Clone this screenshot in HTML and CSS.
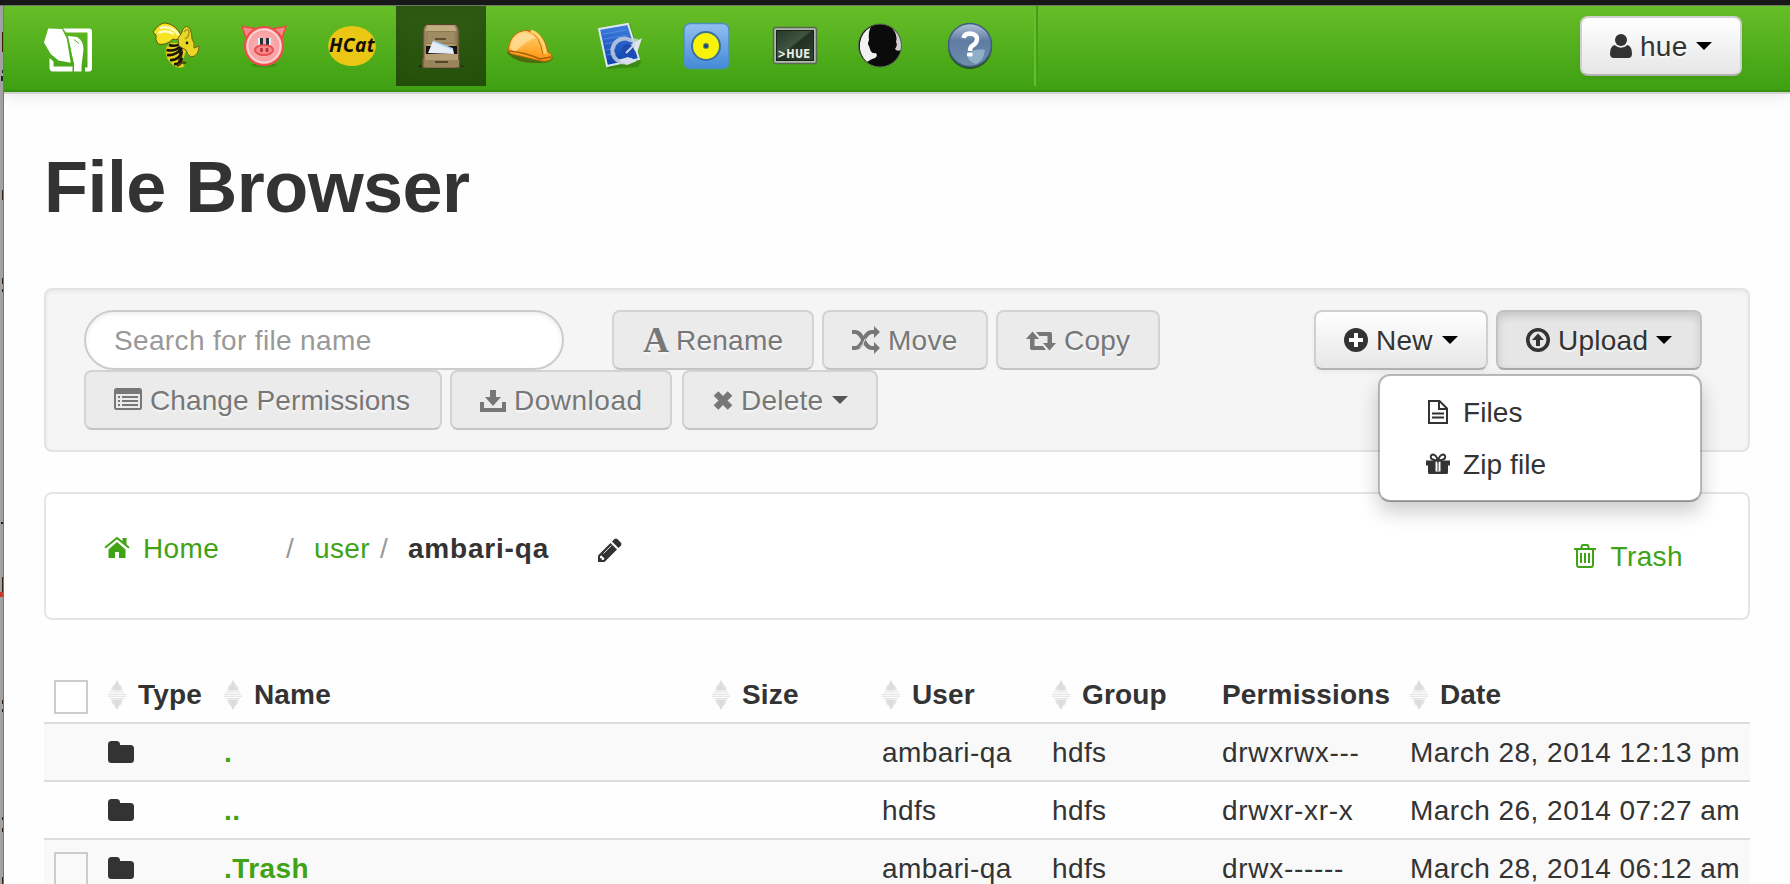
FILE: index.html
```html
<!DOCTYPE html>
<html lang="en">
<head>
<meta charset="utf-8">
<title>File Browser</title>
<link rel="stylesheet" href="styles.css">
</head>
<body>
<svg width="0" height="0" class="defs" aria-hidden="true">
  <defs>
    <linearGradient id="cab" x1="0" x2="1"><stop offset="0" stop-color="#6b5a38"/><stop offset=".15" stop-color="#b9a377"/><stop offset=".85" stop-color="#ad976b"/><stop offset="1" stop-color="#5f4f30"/></linearGradient>
    <linearGradient id="hat" x1="0" y1="0" x2="0" y2="1"><stop offset="0" stop-color="#ffd27a"/><stop offset="1" stop-color="#ff9408"/></linearGradient>
    <linearGradient id="blue" x1="0" y1="0" x2="0" y2="1"><stop offset="0" stop-color="#94bff0"/><stop offset="1" stop-color="#4389d8"/></linearGradient>
    <linearGradient id="plan" x1="0" y1="0" x2="0" y2="1"><stop offset="0" stop-color="#3f7fe0"/><stop offset="1" stop-color="#0b3fa8"/></linearGradient>
    <linearGradient id="scr" x1="0" y1="0" x2="1" y2="1"><stop offset="0" stop-color="#26382a"/><stop offset=".45" stop-color="#40543f"/><stop offset=".5" stop-color="#223022"/><stop offset="1" stop-color="#334434"/></linearGradient>
    <linearGradient id="help" x1="0" y1="0" x2="0" y2="1"><stop offset="0" stop-color="#b3c3d8"/><stop offset=".4" stop-color="#5f7ba3"/><stop offset="1" stop-color="#6d8fac"/></linearGradient>
    <radialGradient id="pigf"><stop offset="0" stop-color="#fbb9bb"/><stop offset="1" stop-color="#f79a9e"/></radialGradient>
    <symbol id="sort" viewBox="0 0 18 32"><path d="M9 1L14.500 11.500H3.500zM9 31L14.500 20.500H3.500z" fill="#dcdcdc"/><path d="M6 6l-2 5M12 6l2 5M6 26l-2-5M12 26l2-5" stroke="#e6e6e6" stroke-width="2"/><path d="M2 13h14M0 15.300h18M0 17.300h18M2 19.500h14" stroke="#e0e0e0" stroke-width="1"/></symbol>
    <symbol id="folder" viewBox="0 0 26 22"><path d="M3.500 0h5A3.500 3.500 0 0 1 12 3.500V4h10.500A3.500 3.500 0 0 1 26 7.500v11a3.500 3.500 0 0 1-3.500 3.500h-19A3.500 3.500 0 0 1 0 18.500v-15A3.500 3.500 0 0 1 3.500 0z" fill="#333"/></symbol>
  </defs>
</svg>

<svg class="edge" width="4" height="884" aria-hidden="true">
  <rect width="4" height="884" fill="#a2a2a2"/>
  <path d="M2 32h2v20h-2z" fill="#3b1d08"/><path d="M2 70h2v3h-2zM1 76h3v5h-3z" fill="#222"/>
  <path d="M2 190h2v10h-2zM2 278h2v6h-2zM2 289h2v3h-2zM1 522h3v2h-3zM2 577h2v19h-2zM2 700h2v4h-2zM2 709h2v3h-2zM2 817h2v3h-2zM2 828h2v4h-2zM2 877h2v7h-2z" fill="#33200f"/>
  <path d="M0 592h3v5H0z" fill="#c23a2c"/>
  <path d="M3 5h1v879H3z" fill="#777"/>
</svg>

<div class="topline"></div>
<nav class="navbar">
  <svg class="logo" viewBox="0 0 48 48"><g fill="#fff"><path d="M4.300 6L18 6.500 22.700 16 26.700 40.300 14.500 38 6.700 31.500 0 20z"/><path d="M19 6H45Q48 6 48 9V46Q48 49 45 49H41V45H43.500V10H22z"/><path d="M24 13.500L33 14.500Q39.500 18 39.500 27L37.500 43V49H30V41L28 32.500z"/><path d="M5.500 35.500L9.500 39V44H28.500V49H9Q5.500 49 5.500 45z"/></g><path d="M30 17l5 4M25 24l2 2" stroke="#58b120" stroke-width="1"/></svg>
  <div class="apps">
    <a class="app"><svg viewBox="0 0 48 48"><path d="M17 22C24 19 31 22 34 29L31 38Q30 43 33 44Q29 47 24 45Q12 38 14 26z" fill="#e6cb20"/><path d="M17 23q6 2 11-1M14.500 28q8 2 15-4M15 33q9 1 15-7M18 38q8 1 12-8M22 42q7 1 8-6" stroke="#17140a" stroke-width="2.600" fill="none"/><path d="M26 21l5 8-2 14-4 2 2-12z" fill="#17140a" opacity=".8"/><path d="M1 10Q8 0 14 1Q25 3 29 14Q27 19 21 17Q14 24 6 22Q3 18 4 13z" fill="#f6e324" stroke="#5d560e" stroke-width="1"/><path d="M8 6Q19 3 27 13M6 11Q14 7 22 12" stroke="#fffac0" stroke-width="2.500" fill="none"/><path d="M26 16Q30 12 31 7Q35 2 38 7Q40 11 40 17Q43 21 42 26L47 24Q47 34 39 35Q35 33 34 28L27 24z" fill="#ead626" stroke="#6e6610" stroke-width="1"/><path d="M32 10q4-5 5 0q0 5-4 7" stroke="#a29a1d" stroke-width="1.500" fill="none"/><circle cx="35" cy="21" r="1.400" fill="#221c08"/><path d="M25 44q5-5 9-3" stroke="#4b4109" stroke-width="2" fill="none"/></svg></a>
    <a class="app"><svg viewBox="0 0 48 48"><ellipse cx="24" cy="43" rx="13" ry="2.500" fill="#2a8010" opacity=".5"/><path d="M2 4.500L17 7 7 19zM46 4.500L31 7 41 19z" fill="#f5898b" stroke="#e94b3f" stroke-width="1.500"/><circle cx="24" cy="24" r="19" fill="url(#pigf)" stroke="#ee4c49" stroke-width="2"/><circle cx="24" cy="24" r="16.500" fill="none" stroke="#fbd3d3" stroke-width="2"/><path d="M18 16h5v7h-5zM26 16h5v7h-5z" fill="#e6eef0"/><path d="M20 16h3v7h-3zM26 16h3v7h-3z" fill="#213238"/><ellipse cx="24" cy="28" rx="9" ry="5" fill="#f58a8d" stroke="#e84f50" stroke-width="2"/><ellipse cx="21.500" cy="28" rx="1.500" ry="2.300" fill="#b93336"/><ellipse cx="27" cy="28" rx="1.500" ry="2.300" fill="#b93336"/></svg></a>
    <a class="app"><svg viewBox="0 0 48 48"><ellipse cx="24" cy="24" rx="23.800" ry="20" fill="#e9c714"/><text x="1" y="30" textLength="46" lengthAdjust="spacingAndGlyphs" font-family="Open Sans, sans-serif" font-size="19" font-weight="700" font-style="italic" fill="#120f02">HCat</text></svg></a>
    <a class="app active"><svg viewBox="0 0 48 48"><ellipse cx="24" cy="44" rx="23" ry="3" fill="#132f04" opacity=".7"/><path d="M10 2.500H38Q42 4 42.500 10V36L43 38V46H5V38L6 36V10Q6 4 10 2.500z" fill="url(#cab)" stroke="#51452b" stroke-width="1"/><path d="M11 4h26l3 5H8z" fill="#c0ad82"/><path d="M10 9.500h28v12H10z" fill="#a08c63" stroke="#8d7a52"/><path d="M18 17h11" stroke="#5d4e2e" stroke-width="2"/><path d="M9 24h31v8H9z" fill="#17120a"/><path d="M11 31L16 19 36 27 37 32z" fill="#e6edf7"/><path d="M16 19l20 8" stroke="#9fd0ee" stroke-width="1.500"/><path d="M8 32h33v6H8z" fill="#b5a076"/><path d="M7 38h35v7H7z" fill="#9a855b"/><path d="M18 40h13" stroke="#54462a" stroke-width="2"/></svg></a>
    <a class="app"><svg viewBox="0 0 48 48"><path d="M1 31Q10 42 34 41Q45 41 47 36L44 33 2 29z" fill="#4e4a08" opacity=".65"/><path d="M2 29C3 16 10 8 22 8.500C34 9 39 18 42 30Q47 32 46 36Q43 40 35 39L10 33Q3 32 2 29z" fill="url(#hat)" stroke="#b86a08" stroke-width="1"/><path d="M4 26Q6 13 18 10.500L31 15Q21 18 9 30z" fill="#ffe1a0" opacity=".75"/><path d="M2 29Q18 30 34 37L45 35" stroke="#a35c08" stroke-width="1.500" fill="none"/><path d="M22 9Q34 12 37 33" stroke="#bf7508" stroke-width="1" fill="none"/><path d="M25 9Q38 14 39 32" stroke="#ffd36d" stroke-width="3" fill="none"/></svg></a>
    <a class="app"><svg viewBox="0 0 48 48"><path d="M7 7L36 2 47 40 44 45 14 47z" fill="#2d6b10" opacity=".5"/><path d="M5 7L34 2 45 37 13 44z" fill="url(#plan)" stroke="#dde5ef" stroke-width="2"/><path d="M9 12l24-4M10 17l24-4M11 22l20-4M12 28l10-2M13 33l9-2" stroke="#5f94e8" stroke-width=".7"/><path d="M44 19L36 18A12 12 0 1 0 39 37" fill="none" stroke="#c4cede" stroke-width="4" opacity=".85"/><path d="M48 16L43 31 36 23z" fill="#dfe4ed"/><path d="M24 38l9 5 10-4-9-4z" fill="#d8dfeb"/><circle cx="34" cy="28" r="6" fill="#1c4bb1"/><path d="M32 31l9-9" stroke="#c8d4ea" stroke-width="2"/></svg></a>
    <a class="app"><svg viewBox="0 0 48 48"><rect x="2" y="1.500" width="45" height="45" rx="6" fill="url(#blue)" stroke="#4a91bd" stroke-width="1.500"/><circle cx="24" cy="24" r="14" fill="#f8f409" stroke="#3b719b" stroke-width="2"/><circle cx="24" cy="24" r="2.700" fill="#1a4b85" stroke="#8a9b36" stroke-width="1"/></svg></a>
    <a class="app"><svg viewBox="0 0 48 48"><rect x="3.500" y="5.500" width="43" height="36" rx="2" fill="#b2b9b0" stroke="#59694f" stroke-width="1.500"/><rect x="6.500" y="8.500" width="37" height="30" fill="url(#scr)" stroke="#172114"/><text x="7.500" y="36" textLength="33" lengthAdjust="spacingAndGlyphs" font-family="DejaVu Sans, sans-serif" font-size="12" font-weight="700" fill="#e6ece4">&gt;HUE</text></svg></a>
    <a class="app"><svg viewBox="0 0 48 48"><circle cx="22" cy="23.500" r="21.500" fill="#0b0b0b"/><path d="M13 5A21.500 21.500 0 0 0 9 40Q13 37 17 36Q20 34 18 31Q13 32 12 27L11 24Q9 22 11 18Q10 9 13 5z" fill="#f2f2f2"/><path d="M34 6Q40 13 38 20Q40 23 37 27Q39 30 43 28A22 22 0 0 0 34 6z" fill="#cfcfcf"/><circle cx="22" cy="23.500" r="21.500" fill="none" stroke="#596750" stroke-width="1"/></svg></a>
    <a class="app"><svg viewBox="0 0 48 48"><circle cx="24" cy="25" r="22" fill="#1b3b26" opacity=".8"/><circle cx="24" cy="23" r="21.500" fill="url(#help)" stroke="#3f5c84" stroke-width="1.500"/><path d="M26 29Q34 26 39 28Q38 38 30 42Q24 40 22 36z" fill="#a8cbdc" opacity=".6"/><path d="M17.500 16Q18.500 11.500 24 11.500Q31.500 12 31 18Q30 22 26 24Q24 25.500 24 29" fill="none" stroke="#fff" stroke-width="4.500"/><rect x="21" y="30.500" width="5.500" height="4" rx="1" fill="#fff"/></svg></a>
  </div>
  <button class="btn user"><svg class="ic w22" viewBox="0 0 22 28"><circle cx="11" cy="8" r="6" fill="#333"/><path d="M4.500 13Q11 18.500 17.500 13Q22 14.500 22 21.500Q22 26 18 26H4Q0 26 0 21.500Q0 14.500 4.500 13z" fill="#333"/></svg><span>hue</span><i class="caret"></i></button>
</nav>

<main class="page">
  <h1>File Browser</h1>

  <section class="well">
    <div class="tools">
      <div class="line">
        <input class="search" type="text" placeholder="Search for file name">
        <button class="btn off rename"><b class="font-a">A</b><span>Rename</span></button>
        <button class="btn off move"><svg class="ic w28" viewBox="0 0 28 28"><g fill="none" stroke="#777" stroke-width="4"><path d="M0 6H3.500C11 6 11.500 22 20 22H23"/><path d="M0 22H3.500C11 22 11.500 6 20 6H23"/></g><path d="M13.500 12.500q-3 7-5.500 9" stroke="#ebebeb" stroke-width="1" fill="none"/><path d="M22 0l6 6-6 6zM22 16l6 6-6 6z" fill="#777"/></svg><span>Move</span></button>
        <button class="btn off copy"><svg class="ic w30" viewBox="0 0 30 28"><path d="M6.500 5.500L13 13H8.500V20H17L20 24H5.500Q4 24 4 22V13H0zM10 6H24.500Q26 6 26 8V17H30L23.500 24.500 17 17H21.500V10H13.500z" fill="#777"/></svg><span>Copy</span></button>
      </div>
      <div class="line">
        <button class="btn off perms"><svg class="ic w28" viewBox="0 0 28 28"><path fill-rule="evenodd" d="M2.500 2H25.500Q28 2 28 4.500V21.500Q28 24 25.500 24H2.500Q0 24 0 21.500V4.500Q0 2 2.500 2zM2 8V21.500Q2 22 2.500 22H25.500Q26 22 26 21.500V8z" fill="#777"/><path d="M4 11h2M4 15h2M4 19h2M8 11h16M8 15h16M8 19h16" stroke="#777" stroke-width="2"/></svg><span>Change Permissions</span></button>
        <button class="btn off download"><svg class="ic w26" viewBox="0 0 26 28"><path d="M10 4h6v7h5l-8 9-8-9h5zM0 16h4v6h18v-6h4v10H0z" fill="#777"/></svg><span>Download</span></button>
        <button class="btn off delete"><svg class="ic w20" viewBox="0 0 20 28"><path d="M3 7.500L17 21.500M17 7.500L3 21.500" stroke="#777" stroke-width="6.500"/></svg><span>Delete</span><i class="caret"></i></button>
      </div>
    </div>
    <div class="actions">
      <button class="btn new"><svg class="ic w24" viewBox="0 0 24 28"><circle cx="12" cy="14" r="12" fill="#333"/><path d="M12 7v14M5 14h14" stroke="#fafafa" stroke-width="4"/></svg><span>New</span><i class="caret"></i></button>
      <div class="drop">
        <button class="btn upload"><svg class="ic w24" viewBox="0 0 24 28"><circle cx="12" cy="14" r="10.200" fill="none" stroke="#333" stroke-width="3.600"/><path d="M12 7.500l6 6.500h-4v6h-4v-6H6z" fill="#333"/></svg><span>Upload</span><i class="caret"></i></button>
        <ul class="menu">
          <li><svg viewBox="0 0 24 28"><path d="M3 3h10.500L21 10.500V25H3z M13 3.500V11h8" fill="none" stroke="#333" stroke-width="2"/><path d="M6 15.500h12M6 19.500h12" stroke="#333" stroke-width="2"/></svg><span>Files</span></li>
          <li><svg viewBox="0 0 24 28"><path d="M0 10.500h24v5h-2V22.500q0 1.500-1.500 1.500h-17Q2 24 2 22.500V15.500H0z" fill="#333"/><path d="M9.500 11.500h5v10h-5z" fill="#fff"/><path d="M11 10.500h2v11h-2z" fill="#999"/><path d="M12 10.500Q10 4.500 7 4.500Q4 5 5 8Q6 10 12 10.500Q18 10 19 8Q20 5 17 4.500Q14 4.500 12 10.500z" fill="none" stroke="#333" stroke-width="2"/></svg><span>Zip file</span></li>
        </ul>
      </div>
    </div>
  </section>

  <section class="crumbs">
    <div class="trail">
      <a class="home"><svg viewBox="0 0 26 28"><path d="M4.500 15.500L13 8l8.500 7.500V24H15v-6h-4v6H4.500z" fill="#40a316"/><path d="M1 13.800L13 4l12 9.800" fill="none" stroke="#40a316" stroke-width="2"/><path d="M18.500 4h4v7l-4-3.500z" fill="#40a316"/></svg><span>Home</span></a>
      <span class="slash first">/</span><a class="u">user</a><span class="slash">/</span>
      <b>ambari-qa</b>
      <svg class="pencil" viewBox="0 0 24 24"><path d="M0 24V17.500L12.500 5 19 11.500 6.500 24z" fill="#333"/><path d="M14 3.500l2.500-2.500Q18 0 19.300 1l3.700 3.700Q24 6 23 7.500L20.500 10z" fill="#333"/><path d="M2 18.500v1.800h1.800V22h1.500l1.300-1.300-3.300-3.500z" fill="#fff"/><path d="M5.500 15.500l8-8" stroke="#ddd" stroke-width="1"/></svg>
    </div>
    <a class="trash"><svg viewBox="0 0 22 24"><g fill="none" stroke="#40a316" stroke-width="2"><path d="M0 5h22M7 5L8 1.500Q8.200 1 9 1h4q.800 0 1 .5L15 5M3 5V20.500Q3 23 5 23H17Q19 23 19 20.500V5M7 9v10M11 9v10M15 9v10"/></g></svg><span>Trash</span></a>
  </section>

  <table class="files">
    <colgroup><col class="c1"><col class="c2"><col class="c3"><col class="c4"><col class="c4"><col class="c4"><col class="c5"><col class="c6"></colgroup>
    <thead>
      <tr>
        <th><i class="box"></i></th>
        <th><div><svg><use href="#sort"/></svg>Type</div></th>
        <th><div><svg><use href="#sort"/></svg>Name</div></th>
        <th><div><svg><use href="#sort"/></svg>Size</div></th>
        <th><div><svg><use href="#sort"/></svg>User</div></th>
        <th><div><svg><use href="#sort"/></svg>Group</div></th>
        <th><div>Permissions</div></th>
        <th><div><svg><use href="#sort"/></svg>Date</div></th>
      </tr>
    </thead>
    <tbody>
      <tr><td></td><td><svg class="fold"><use href="#folder"/></svg></td><td><b>.</b></td><td></td><td>ambari-qa</td><td>hdfs</td><td class="mode">drwxrwx---</td><td class="date">March 28, 2014 12:13 pm</td></tr>
      <tr><td></td><td><svg class="fold"><use href="#folder"/></svg></td><td><b>..</b></td><td></td><td>hdfs</td><td>hdfs</td><td class="mode">drwxr-xr-x</td><td class="date">March 26, 2014 07:27 am</td></tr>
      <tr><td><i class="box"></i></td><td><svg class="fold"><use href="#folder"/></svg></td><td><b>.Trash</b></td><td></td><td>ambari-qa</td><td>hdfs</td><td class="mode">drwx------</td><td class="date">March 28, 2014 06:12 am</td></tr>
    </tbody>
  </table>
</main>
</body>
</html>
```
FILE: styles.css
```css
* { box-sizing: border-box; }
html { height: 884px; overflow: hidden; }
body {
  margin: 0;
  height: 884px;
  overflow: hidden;
  background: #fefefe;
  color: #333;
  font: 28px/40px "Liberation Sans", Arial, sans-serif;
  letter-spacing: .4px;
  position: relative;
}
svg { display: block; flex: none; }
.defs { position: absolute; }
.edge { position: absolute; left: 0; top: 0; }
.topline { height: 6px; background: #181818; border-bottom: 1px solid #6d7868; position: relative; }

.navbar {
  margin-left: 4px;
  height: 86px;
  padding: 0 48px 0 40px;
  display: flex;
  align-items: flex-start;
  background: linear-gradient(#67be28, #3ea012);
  border-bottom: 2px solid #389010;
  box-shadow: 0 2px 0 #d2d2d2, 0 2px 16px rgba(0, 0, 0, .12);
}
.logo { width: 48px; height: 49px; margin-top: 16px; overflow: visible; }
.apps {
  display: flex;
  height: 80px;
  margin-left: 40px;
  padding-right: 20px;
  border-right: 2px solid #68bd2c;
  box-shadow: 2px 0 0 #42a016;
}
.app { width: 88px; height: 80px; display: flex; align-items: center; justify-content: center; }
.app svg { width: 48px; height: 48px; overflow: visible; }
.app.active { width: 90px; background: linear-gradient(#305c14, #23510a); box-shadow: inset 0 6px 16px rgba(0, 0, 0, .08); }

.btn {
  height: 60px;
  padding: 0 28px;
  display: flex;
  align-items: center;
  flex: none;
  border: 2px solid #cfcfcf;
  border-bottom-color: #b3b3b3;
  border-radius: 8px;
  background: linear-gradient(#fff, #e6e6e6);
  box-shadow: inset 0 2px 0 rgba(255, 255, 255, .2), 0 2px 4px rgba(0, 0, 0, .05);
  color: #333;
  font: inherit;
  letter-spacing: .25px;
  text-shadow: 0 2px 2px rgba(255, 255, 255, .75);
  white-space: nowrap;
}
.btn span, .menu span, .home span, .trash span { padding-top: 2px; }
.ic { height: 28px; margin-right: 8px; }
.w20 { width: 20px; margin-left: 1px; }
.w22 { width: 22px; }
.w24 { width: 24px; }
.w26 { width: 26px; }
.w28 { width: 28px; }
.w30 { width: 30px; }
.caret { margin-left: auto; border: 8px solid transparent; border-top-color: #000; border-bottom: 0; }
.off { background: #ebebeb; border-color: #d3d3d3; border-bottom-color: #c4c4c4; color: #777; box-shadow: none; }
.off .caret { border-top-color: #555; }
.font-a { width: 28px; margin-right: 6px; font: bold 36px/40px "Liberation Serif", serif; letter-spacing: 0; }
.user { width: 162px; margin: 10px 0 0 auto; }
.perms { letter-spacing: .1px; }

.page { margin: 0 40px 0 44px; }
h1 { margin: 55px 0 101px; font-size: 72px; line-height: 80px; font-weight: bold; letter-spacing: -.55px; height: 40px; }

.well {
  height: 164px;
  padding: 20px 46px 20px 38px;
  display: flex;
  justify-content: space-between;
  background: #f5f5f5;
  border: 2px solid #e3e3e3;
  border-radius: 8px;
  box-shadow: inset 0 2px 4px rgba(0, 0, 0, .05);
}
.tools { display: flex; flex-direction: column; }
.line { display: flex; }
.search {
  width: 480px;
  height: 60px;
  margin-right: 48px;
  padding: 2px 28px 0;
  border: 2px solid #ccc;
  border-radius: 30px;
  background: #fff;
  box-shadow: inset 0 2px 4px rgba(0, 0, 0, .075);
  font: inherit;
  letter-spacing: .35px;
}
.search::placeholder { color: #999; opacity: 1; }
.rename { width: 202px; margin-right: 8px; }
.move { width: 166px; margin-right: 8px; }
.copy { width: 164px; }
.perms { width: 358px; margin-right: 8px; }
.download { width: 222px; margin-right: 10px; letter-spacing: .5px; }
.delete { width: 196px; }
.actions { display: flex; gap: 8px; }
.new { width: 174px; }
.drop { position: relative; height: 60px; }
.upload {
  width: 206px;
  background: #e6e6e6;
  border-color: #c2c2c2;
  border-bottom-color: #a9a9a9;
  box-shadow: inset 0 4px 8px rgba(0, 0, 0, .15);
}
.menu {
  position: absolute;
  z-index: 2;
  top: 64px;
  right: 0;
  width: 324px;
  height: 128px;
  margin: 0;
  padding: 10px 0;
  list-style: none;
  letter-spacing: .1px;
  background: #fff;
  background-clip: padding-box;
  border: 2px solid rgba(0, 0, 0, .24);
  border-bottom-color: rgba(0, 0, 0, .34);
  border-radius: 12px;
  box-shadow: 0 10px 20px rgba(0, 0, 0, .2);
}
.menu li { display: flex; align-items: center; height: 52px; padding-left: 46px; }
.menu svg { width: 24px; height: 28px; margin-right: 13px; }

.crumbs {
  height: 128px;
  margin-top: 40px;
  padding: 36px 65px 0 58px;
  display: flex;
  justify-content: space-between;
  background: #fff;
  border: 2px solid #e5e5e5;
  border-radius: 8px;
}
.trail { display: flex; align-items: center; height: 40px; margin-top: -2px; }
.trail > span, .trail > b, .u { padding-top: 2px; }
.home, .trash, .u { color: #40a316; }
.home { display: flex; align-items: center; width: 182px; }
.home svg { width: 26px; height: 28px; margin-right: 13px; }
.slash { color: #999; width: 28px; }
.slash.first { width: 28px; }
.u { width: 66px; }
.trail b { width: 190px; letter-spacing: .8px; }
.pencil { width: 24px; height: 24px; margin-top: 3px; }
.trash { display: flex; align-items: center; height: 40px; margin-top: 6px; }
.trash svg { width: 22px; height: 24px; margin-right: 14px; }

.files { width: 1706px; margin-top: 44px; border-collapse: separate; border-spacing: 0; table-layout: fixed; }
.c1 { width: 54px; }
.c2 { width: 116px; }
.c3 { width: 488px; }
.c4 { width: 170px; }
.c5 { width: 188px; }
.c6 { width: 350px; }
.files th { height: 58px; padding: 5px 0 0 10px; text-align: left; vertical-align: middle; letter-spacing: .15px; }
.files th div { display: flex; align-items: center; height: 40px; margin-top: -2px; }
.files th svg { width: 18px; height: 32px; margin-right: 12px; }
.files td { height: 58px; padding: 1px 0 0 10px; border-top: 2px solid #ddd; white-space: nowrap; line-height: 40px; vertical-align: middle; }
.files tbody tr:nth-child(odd) td { background: #f9f9f9; }
.files td b { color: #40a316; }
.files td.mode { letter-spacing: .7px; }
.files td.date { letter-spacing: .48px; }
.fold { width: 26px; height: 22px; margin-bottom: 2px; }
.box { display: block; width: 34px; height: 34px; margin-top: 2px; border: 2px solid #ccc; background: #fff; }
.files td .box { margin-top: 0; background: transparent; }
```
